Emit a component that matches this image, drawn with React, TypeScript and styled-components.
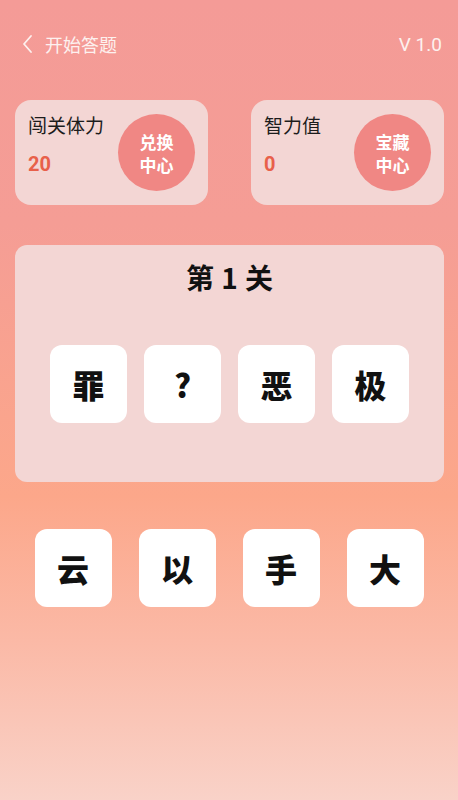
import { FC } from "react";
import styled, { createGlobalStyle } from "styled-components";

const GlobalStyle = createGlobalStyle`
  html, body {
    margin: 0;
    padding: 0;
  }
  body {
    font-family: "Noto Sans CJK SC", "Noto Sans", sans-serif;
  }
`;

const Page = styled.div`
  width: 458px;
  height: 800px;
  overflow: hidden;
  display: flex;
  flex-direction: column;
  background: linear-gradient(
    180deg,
    #f49b97 0%,
    #f59d95 28%,
    #fca78a 62%,
    #fbb9a6 80%,
    #f9d2c8 100%
  );
`;

const Header = styled.div`
  height: 88px;
  display: flex;
  align-items: center;
  justify-content: space-between;
  padding: 0 16px 0 20px;
  color: #fdf1ef;
  font-size: 18px;
`;

const Back = styled.div`
  display: flex;
  align-items: center;
  gap: 9px;
  > svg {
    width: 16px;
    height: 22px;
  }
`;

const Version = styled.span`
  font-family: "Roboto", "Noto Sans", sans-serif;
  font-size: 19px;
`;

const StatRow = styled.div`
  display: flex;
  justify-content: space-between;
  padding: 12px 14px 0 15px;
`;

const StatCard = styled.div`
  width: 193px;
  height: 105px;
  box-sizing: border-box;
  border-radius: 16px;
  background: #f3d6d4;
  display: flex;
  align-items: center;
  justify-content: space-between;
  padding: 0 13px 0 13px;
`;

const StatText = styled.div`
  display: flex;
  flex-direction: column;
  gap: 13px;
  align-self: flex-start;
  padding-top: 12px;
`;

const StatLabel = styled.span`
  font-size: 19px;
  font-weight: 400;
  color: #1c1c1c;
  line-height: 26px;
`;

const StatValue = styled.span`
  font-family: "Roboto", "Noto Sans", sans-serif;
  font-weight: 700;
  font-size: 20px;
  color: #e8604a;
  line-height: 26px;
`;

const Bubble = styled.div`
  width: 77px;
  height: 77px;
  border-radius: 50%;
  background: #f08784;
  color: #fff;
  font-weight: 700;
  font-size: 17px;
  display: flex;
  flex-direction: column;
  align-items: center;
  justify-content: center;
`;

const BubbleLine = styled.span`
  display: block;
  line-height: 23px;
`;

const Board = styled.div`
  margin: 40px 14px 0 15px;
  height: 237px;
  border-radius: 12px;
  background: #f3d6d4;
  display: flex;
  flex-direction: column;
  align-items: center;
`;

const Level = styled.div`
  margin-top: 12px;
  font-size: 28px;
  font-weight: 700;
  color: #111;
  line-height: 40px;
  word-spacing: 1px;
`;

const TileRow = styled.div<{ $gap: number; $top?: number }>`
  display: flex;
  justify-content: center;
  gap: ${(p) => p.$gap}px;
  margin-top: ${(p) => p.$top ?? 0}px;
`;

const Tile = styled.div`
  width: 77px;
  height: 78px;
  border-radius: 12px;
  background: #fff;
  display: flex;
  align-items: center;
  justify-content: center;
  font-size: 32px;
  font-weight: 900;
  color: #111;
`;

const Stat: FC<{ label: string; value: string; action: [string, string] }> = ({
  label,
  value,
  action,
}) => (
  <StatCard>
    <StatText>
      <StatLabel>{label}</StatLabel>
      <StatValue>{value}</StatValue>
    </StatText>
    <Bubble>
      <BubbleLine>{action[0]}</BubbleLine>
      <BubbleLine>{action[1]}</BubbleLine>
    </Bubble>
  </StatCard>
);

const question = ["罪", "?", "恶", "极"];
const choices = ["云", "以", "手", "大"];

export default function App() {
  return (
    <>
      <GlobalStyle />
      <Page>
        <Header>
          <Back>
            <svg viewBox="0 0 16 22" fill="none">
              <path
                d="M11 3 L4 11 L11 19"
                stroke="#fdf1ef"
                strokeWidth="1.8"
                strokeLinecap="round"
                strokeLinejoin="round"
              />
            </svg>
            <span>开始答题</span>
          </Back>
          <Version>V 1.0</Version>
        </Header>
        <StatRow>
          <Stat label="闯关体力" value="20" action={["兑换", "中心"]} />
          <Stat label="智力值" value="0" action={["宝藏", "中心"]} />
        </StatRow>
        <Board>
          <Level>第 1 关</Level>
          <TileRow $gap={17} $top={48}>
            {question.map((c, i) => (
              <Tile key={i}>{c}</Tile>
            ))}
          </TileRow>
        </Board>
        <TileRow $gap={27} $top={47}>
          {choices.map((c, i) => (
            <Tile key={i}>{c}</Tile>
          ))}
        </TileRow>
      </Page>
    </>
  );
}
